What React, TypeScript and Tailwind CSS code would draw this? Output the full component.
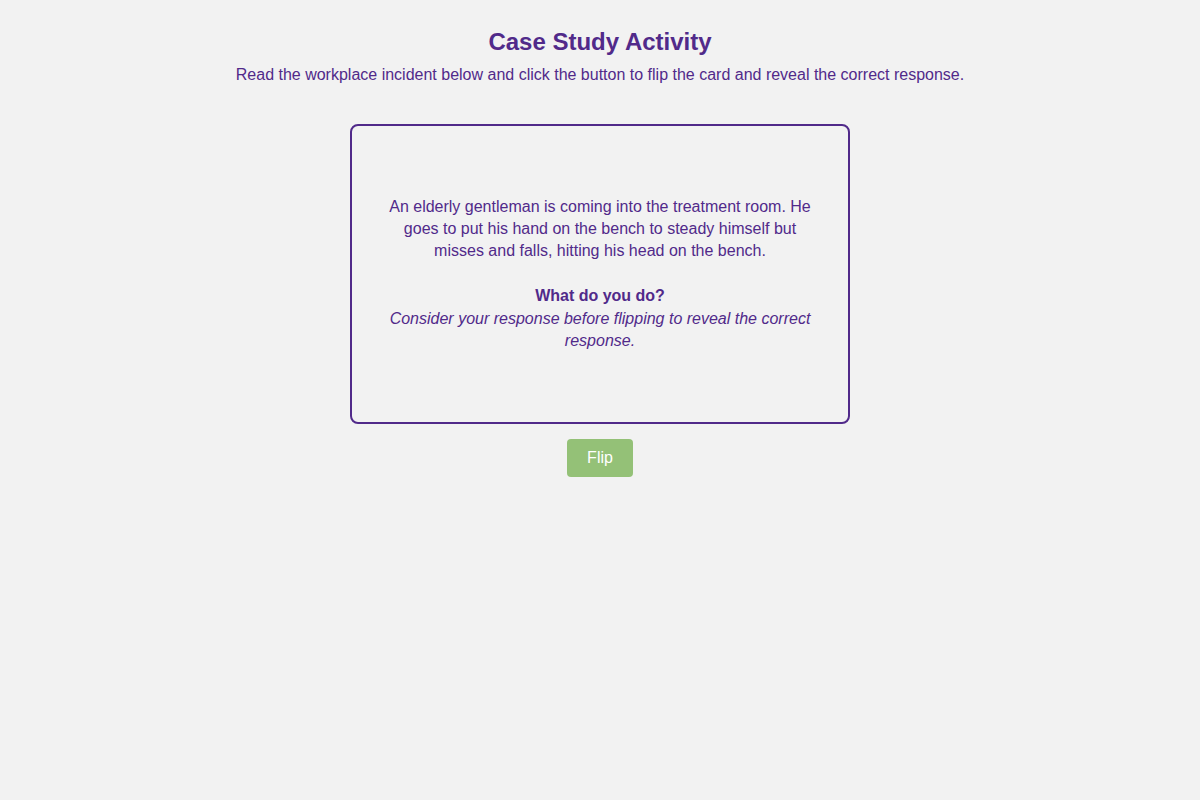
export default function App() {
  return (
    <div className="min-h-screen bg-[#f2f2f2] font-['Liberation_Sans',Arial,sans-serif] text-[#512a8a]">
      <div className="flex flex-col items-center pt-[28px]">
        <h1 className="text-[24px] font-bold leading-[28px]">Case Study Activity</h1>
        <p className="mt-[8px] text-[16px] leading-[22px]">
          Read the workplace incident below and click the button to flip the card and reveal the correct response.
        </p>

        <div className="mt-[38px] flex h-[300px] w-[500px] items-center justify-center rounded-[8px] border-2 border-[#512a8a] px-[36px] pb-[1px] text-center text-[16px] leading-[22px]">
          <div>
            <p>
              An elderly gentleman is coming into the treatment room. He goes to put his hand on the bench to steady himself but misses and falls, hitting his head on the bench.
            </p>
            <p className="mt-[23px] font-bold">What do you do?</p>
            <p className="mt-[1px] italic">Consider your response before flipping to reveal the correct response.</p>
          </div>
        </div>

        <button
          className="mt-[15px] h-[38px] w-[66px] rounded-[4px] bg-[#94c177] text-[16px] text-white"
          type="button"
        >
          Flip
        </button>
      </div>
    </div>
  );
}
